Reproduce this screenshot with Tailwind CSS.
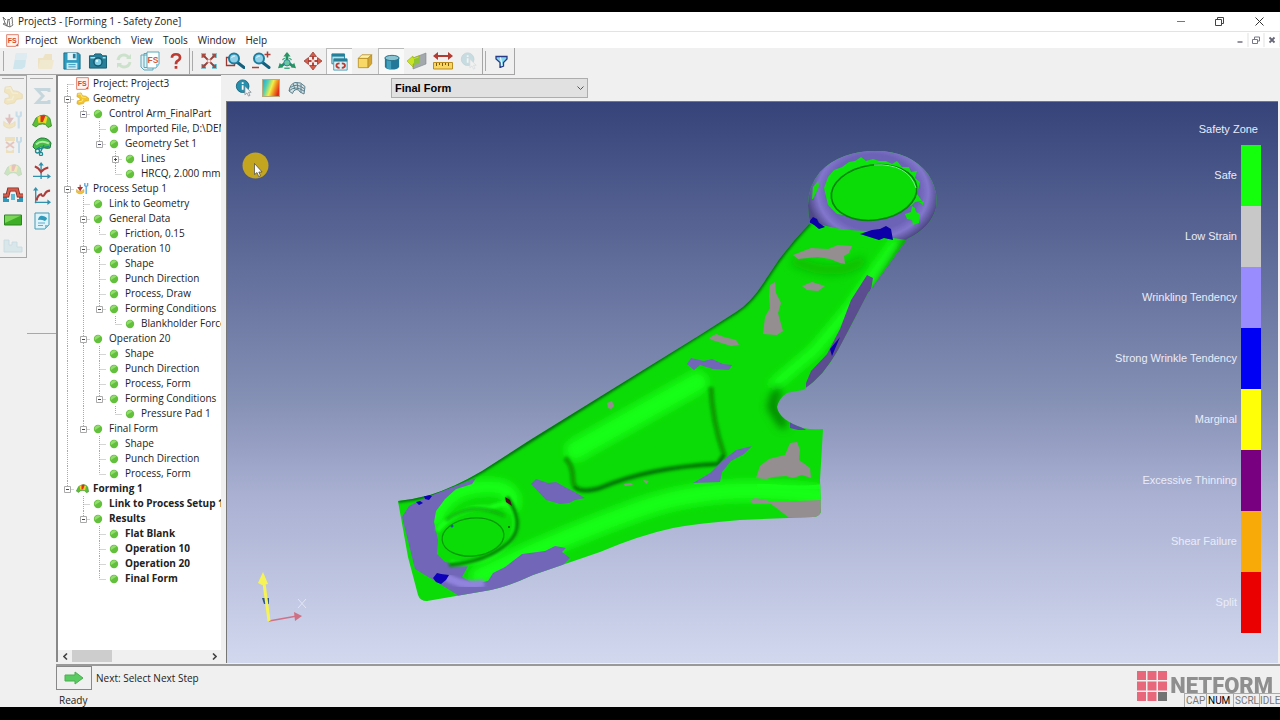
<!DOCTYPE html>
<html lang="en">
<head>
  <meta charset="UTF-8" />
  <meta name="viewport" content="width=device-width, initial-scale=1.0"/>
  <title>Project3 - [Forming 1 - Safety Zone]</title>
  <script src="https://cdn.jsdelivr.net/npm/@tailwindcss/browser@4"></script>
</head>
<body class="bg-black h-screen flex flex-col pt-3 pb-[13px] overflow-hidden font-['Open_Sans','Noto_Sans',sans-serif] text-[10px] text-[#222]">

  <!-- Shared icons -->
  <svg class="hidden">
    <symbol id="i-fs" viewBox="0 0 14 14">
      <path d="M.7.7h12.6v9.3l-3 3.3H.7z" fill="#fff4f0" stroke="#dd7a66"/>
      <path d="M13.3 10v3.3H10z" fill="#d9583f"/>
      <text x="6.8" y="9.6" font-size="7.5" font-weight="700" text-anchor="middle" fill="#d8452b" font-family="Liberation Sans">FS</text>
    </symbol>
    <symbol id="i-dot" viewBox="0 0 10 10">
      <circle cx="5" cy="5" r="4.2" fill="#63c03c"/>
      <path d="M2 6a3.3 3.3 0 0 1 5.500-3.500z" fill="#93dc70"/>
    </symbol>
    <symbol id="i-geometry" viewBox="0 0 14 14">
      <path d="M1.500 1.500l4-.5 1.500 3 3.500.5 3 2v3l-4 .5-1.500 2.500-5 1-2-1 .5-3 3-.5-.5-2.500-3-1.500z" fill="#f2c52f" stroke="#cf9a14" stroke-width=".6"/>
      <path d="M2 2.500l3-.5 1.500 3.500 4 .5M3 10.500l3.500-.5 1-2.500" stroke="#fce88a" fill="none"/>
    </symbol>
    <symbol id="i-setup" viewBox="0 0 14 14">
      <path d="M.5 8q4 4 8 0v3q-4 3.500-8 0z" fill="#f0c43b" stroke="#c49517" stroke-width=".5"/>
      <path d="M4.500 3v4M2.500 6l2 3 2-3z" stroke="#b0352c" stroke-width="1.200" fill="#b0352c"/>
      <path d="M11 5v8M9.500 1v3l1.500 1 1.500-1V1" fill="none" stroke="#5cabdc" stroke-width="1.500"/>
    </symbol>
    <symbol id="i-forming" viewBox="0 0 20 16">
      <path d="M.5 12L4 5q4-3 8-3 4 .5 6 3.500l1.500 7.500-3.500 1.500-2.500-3q-3-1-6.500 0L4 14z" fill="#5cbf35" stroke="#39872a" stroke-width=".8"/>
      <path d="M5.500 4q5-3 10 0l-1.500 6.500q-4-1.500-7.500-.5z" fill="#f4d427"/>
      <path d="M8.500 2.500q3-1 5 0L11 9H8.500z" fill="#d8331d"/>
    </symbol>
    <symbol id="i-trimmed" viewBox="0 0 20 20">
      <path d="M1 11Q2 4 9 2q7-.5 10 5l-1 5q-4 1-6-.5-4-1.500-6 .5l-2 2z" fill="#43bd45" stroke="#1f7b35"/>
      <path d="M4 8.500q5-5 13-1" stroke="#aeeaa0" stroke-width="2" fill="none"/>
      <path d="M6 13l11-2.500M8 17l4-8" stroke="#1d8a93" stroke-width="1.300"/>
      <circle cx="5.500" cy="15" r="2" fill="none" stroke="#1d8a93" stroke-width="1.300"/><circle cx="9" cy="18" r="1.600" fill="none" stroke="#1d8a93" stroke-width="1.300"/>
    </symbol>
    <symbol id="i-die" viewBox="0 0 20 16">
      <path d="M0 15V9h4v3h2v3zM20 15V9h-4v3h-2v3z" fill="#3097b9"/>
      <path d="M8 7h4v6H8z" fill="#62bbd5"/>
      <path d="M0 8.500h4.500l1.500-6h8l1.500 6H20" fill="none" stroke="#742a24" stroke-width="4"/>
      <path d="M0 8.500h4.500l1.500-6h8l1.500 6H20" fill="none" stroke="#d75d4b" stroke-width="2.400"/>
    </symbol>
    <symbol id="i-tools" viewBox="0 0 20 20">
      <path d="M2 2h10v4H2zM3 14q4 4 8 0v4H3z" fill="#e5b12d"/>
      <path d="M3 7l8 6M11 7l-8 6" stroke="#c44d32" stroke-width="2"/>
      <path d="M16 8v10M14 2v4l2 2 2-2V2" fill="none" stroke="#4ba5d5" stroke-width="2"/>
    </symbol>
    <symbol id="i-mag" viewBox="0 0 20 20">
      <path d="M11.500 11.500l6.500 5" stroke="#14617f" stroke-width="3" stroke-linecap="round"/>
      <circle cx="8" cy="7.500" r="5" fill="#8fd0e8" stroke="#1d7d9f" stroke-width="2"/>
      <path d="M5.500 7q1-2.500 3.500-2" stroke="#e5f8ff" fill="none"/>
    </symbol>
    <symbol id="i-info" viewBox="0 0 20 20">
      <circle cx="8.500" cy="8" r="7" fill="#278eab" stroke="#166780"/>
      <path d="M8.500 7v5M8.500 3.500v2" stroke="#fff" stroke-width="2"/>
      <path d="M11 8v9.500l2.300-2 1.700 3.500 1.700-.8-1.700-3.400h3z" fill="#f1f5f7" stroke="#76858b" stroke-width=".8"/>
    </symbol>
  </svg>

  <!-- Title bar -->
  <header class="h-5 shrink-0 bg-white border-b border-[#e3e3e3] flex items-center pl-[2px]">
    <svg class="w-3 h-3 mr-1" viewBox="0 0 12 12" fill="none" stroke="#666" stroke-width=".9"><path d="M1 1l2 6 2 3 1-7M5 10l3 1 3-2-1-2M8 11L7 4l3-3 .5 6M1 1l3 3M3 7L1 8l4 2M7 4L6 3"/></svg>
    <h1>Project3 - [Forming 1 - Safety Zone]</h1>
    <div class="ml-auto flex">
      <button aria-label="Minimize" class="w-[39px] h-[19px] grid place-items-center"><svg class="w-2 h-2" viewBox="0 0 8 8"><path d="M0 3.500h8" stroke="#777"/></svg></button>
      <button aria-label="Restore" class="w-[39px] h-[19px] grid place-items-center"><svg class="w-[9px] h-[9px]" viewBox="0 0 9 9" fill="none" stroke="#444"><path d="M.5 2.500h6v6h-6zM2.500 2.500v-2h6v6h-2"/></svg></button>
      <button aria-label="Close" class="w-[41px] h-[19px] grid place-items-center"><svg class="w-[9px] h-[9px]" viewBox="0 0 9 9" stroke="#333"><path d="M.5.5l8 8M8.500.5l-8 8"/></svg></button>
    </div>
  </header>

  <!-- Menu bar -->
  <nav class="h-4 shrink-0 bg-white flex items-center pl-[6px]">
    <svg class="w-[13px] h-[13px] mr-[6px]"><use href="#i-fs"/></svg>
    <div class="flex gap-[10px]">
      <button>Project</button>
      <button>Workbench</button>
      <button>View</button>
      <button>Tools</button>
      <button>Window</button>
      <button>Help</button>
    </div>
    <div class="ml-auto flex gap-[2px] bg-[#f0f0f0] pr-px">
      <button aria-label="Minimize window" class="w-[14px] h-[14px] bg-white grid place-items-center"><svg class="w-2 h-2" viewBox="0 0 8 8"><path d="M1.500 6h5" stroke="#667" stroke-width="1.400"/></svg></button>
      <button aria-label="Restore window" class="w-[14px] h-[14px] bg-white grid place-items-center"><svg class="w-2 h-2" viewBox="0 0 8 8" fill="none" stroke="#778"><path d="M.5 3.500h5v4h-5zM2.500 3V1h5v4H6"/></svg></button>
      <button aria-label="Close window" class="w-[14px] h-[14px] bg-white grid place-items-center"><svg class="w-2 h-2" viewBox="0 0 8 8"><path d="M1.500 1.500l5 5M6.500 1.500l-5 5" stroke="#667" stroke-width="1.800"/></svg></button>
    </div>
  </nav>

  <!-- Main toolbar -->
  <div class="h-[27px] shrink-0 bg-[#f0f0f0] flex">
    <div class="flex items-center border-b border-r border-[#a5a5a5] pl-[3px]">
      <span class="w-px h-5 bg-[#aaa] mr-[3px]"></span>
      <button disabled aria-label="New" class="w-[26px] h-[26px] grid place-items-center"><svg class="w-5 h-5 opacity-20" viewBox="0 0 20 20"><path d="M6 2h11l-2 14-3 2H3z" fill="#4bbbe6"/><path d="M6 2h11l-1 7H5z" fill="#9ce1f5"/></svg></button>
      <button disabled aria-label="Open" class="w-[26px] h-[26px] grid place-items-center"><svg class="w-5 h-5 opacity-25" viewBox="0 0 20 20"><path d="M2 7h5l2-4h7v14H2z" fill="#e9b94a"/><path d="M4 9h14l-2 9H2z" fill="#f5d273"/></svg></button>
      <button aria-label="Save" class="w-[26px] h-[26px] grid place-items-center"><svg class="w-[18px] h-[18px]" viewBox="0 0 20 20"><path d="M1 1h16l2 2v16H1z" fill="#2e9bc0" stroke="#176983"/><path d="M5 1h10v8H5z" fill="#e4f3f8"/><path d="M11 2h3v5h-3z" fill="#237e9e"/><path d="M4 12h12v7H4z" fill="#c9eaf4"/><path d="M6 14h8M6 16.500h8" stroke="#3295b5"/></svg></button>
      <button aria-label="Screenshot" class="w-[26px] h-[26px] grid place-items-center"><svg class="w-5 h-[18px]" viewBox="0 0 20 19"><path d="M1 4h4l2-2h6l2 2h4v13H1z" fill="#277f99" stroke="#155a70"/><path d="M2 6h5M15 6h3" stroke="#a7e3ef" stroke-width="1.500"/><circle cx="10" cy="10.500" r="5" fill="#155a70"/><circle cx="10" cy="10.500" r="3.500" fill="#83d0e7"/><circle cx="9" cy="9.500" r="1.200" fill="#e5faff"/></svg></button>
      <button disabled aria-label="Refresh" class="w-[26px] h-[26px] grid place-items-center"><svg class="w-[18px] h-[18px] opacity-25" viewBox="0 0 18 18" fill="none" stroke="#65b860" stroke-width="3"><path d="M3 8q1-5 6-5 3 0 5 3M15 10q-1 5-6 5-3 0-5-3"/><path d="M11 7h5V2zM7 11H2v5z" fill="#65b860" stroke="none"/></svg></button>
      <button aria-label="Copy report" class="w-[26px] h-[26px] grid place-items-center"><svg class="w-5 h-5" viewBox="0 0 20 20"><path d="M1 4h12v15H4l-3-3zM4 2.500h12v14H4z" fill="#dff2f7" stroke="#5fa6b7"/><path d="M7 1h12v12l-3 4H7z" fill="#fbffff" stroke="#5fa6b7"/><path d="M16 17v-4h3z" fill="#8fcddd"/><text x="13" y="11.500" font-size="8.500" font-weight="700" text-anchor="middle" fill="#dc5638" font-family="Liberation Sans">FS</text></svg></button>
      <button aria-label="Help" class="w-[26px] h-[26px] grid place-items-center"><svg class="w-[18px] h-[18px]" viewBox="0 0 20 20" fill="none" stroke="#bc3b31" stroke-width="3"><path d="M5.500 6.500q0-4 4.500-4t4.500 4q0 2-2.500 3.200Q10 10.500 10 13.500M10 15.500v3"/></svg></button>
    </div>
    <div class="flex items-center border-b border-r border-[#a5a5a5] pl-[2px]">
      <span class="w-px h-5 bg-[#aaa] mr-[3px]"></span>
      <button aria-label="Fit view" class="w-[26px] h-[26px] grid place-items-center"><svg class="w-[18px] h-[18px]" viewBox="0 0 18 18"><path d="M1 1h5v5H1zM12 1h5v5h-5zM1 12h5v5H1zM12 12h5v5h-5z" fill="#7fc4d2"/><path d="M3 3l12 12M15 3L3 15" stroke="#9e4038" stroke-width="1.800"/><path d="M2 2h4L2 6zM16 2h-4l4 4zM2 16h4l-4-4zM16 16h-4l4-4z" fill="#a84a40"/><path d="M7.500 7.500h3v3h-3z" fill="#f3e5df"/></svg></button>
      <button aria-label="Zoom window" class="w-[26px] h-[26px] grid place-items-center"><svg class="w-5 h-5" viewBox="0 0 20 20"><path d="M1.500 6.500h8v8h-8z" fill="none" stroke="#9e3932" stroke-width="1.300"/><use href="#i-mag" x="1" width="20" height="20"/></svg></button>
      <button aria-label="Zoom in and out" class="w-[26px] h-[26px] grid place-items-center"><svg class="w-5 h-5" viewBox="0 0 20 20"><use href="#i-mag" width="20" height="20"/><path d="M13.500 3.500h6M16.500.5v6M1 16.500h7" stroke="#ac3c34" stroke-width="1.500"/></svg></button>
      <button aria-label="Rotate" class="w-[26px] h-[26px] grid place-items-center"><svg class="w-[18px] h-[18px]" viewBox="0 0 20 20"><path d="M10 2v9l-7 5M10 11l7 5" fill="none" stroke="#278c66" stroke-width="3"/><path d="M10 0l4 5H6zM0 18l2-6 4 5zM20 18l-2-6-4 5z" fill="#279565"/><circle cx="10" cy="12" r="3.500" fill="#6ac8a1" stroke="#287c94"/><path d="M5 9q1-2 3-2M15 9q-1-2-3-2M7 18h6" stroke="#4aab83" stroke-width="1.500" fill="none"/></svg></button>
      <button aria-label="Pan" class="w-[26px] h-[26px] grid place-items-center"><svg class="w-[18px] h-[18px]" viewBox="0 0 18 18"><path d="M9 2v14M2 9h14" stroke="#b7463a" stroke-width="2"/><path d="M9 0l3.500 4.500h-7zM9 18l3.500-4.500h-7zM0 9l4.500-3.500v7zM18 9l-4.500-3.500v7z" fill="#d35e4c" stroke="#963229" stroke-width=".7"/><path d="M7.500 7.500h3v3h-3z" fill="#f8dcd6"/></svg></button>
      <button aria-label="Synchronize views" class="w-[26px] h-[26px] grid place-items-center bg-[#f9f9f9] border-l border-t border-[#bbb]"><svg class="w-[18px] h-[18px]" viewBox="0 0 20 20"><path d="M1 1h14v11H1z" fill="#b7e0ea" stroke="#22809b"/><path d="M1 1h14v3H1z" fill="#22809b"/><path d="M3 7h15v12H3z" fill="#d9f0f5" stroke="#4a9cb2"/><path d="M3 6h15v3.500H3z" fill="#277f98"/><path d="M9.500 11.500q-3.500 0-3.500 2.500t3.500 2.500M12 11.500q3.500 0 3.500 2.500T12 16.500" fill="none" stroke="#be3a31" stroke-width="2"/></svg></button>
      <button aria-label="Standard view" class="w-[26px] h-[26px] grid place-items-center"><svg class="w-4 h-4" viewBox="0 0 18 18" stroke="#b28a20" stroke-width=".9"><path d="M1.500 6h11v10.500h-11z" fill="#f8d866"/><path d="M1.500 6l4-4h11l-4 4z" fill="#fff0a5"/><path d="M12.500 6l4-4v10l-4 4.500z" fill="#d5a633"/></svg></button>
      <button aria-label="Shaded" class="w-[26px] h-[26px] grid place-items-center bg-[#f9f9f9] border-l border-t border-[#bbb]"><svg class="w-4 h-4" viewBox="0 0 18 18"><path d="M1 4.500v10q2 3 8 3t8-3v-10z" fill="#217899"/><path d="M3 6v10q2 1 5 1V6z" fill="#43a0bc"/><ellipse cx="9" cy="4.500" rx="8" ry="3" fill="#8ac3d2" stroke="#216a83"/></svg></button>
      <button aria-label="Clip plane" class="w-[26px] h-[26px] grid place-items-center"><svg class="w-5 h-5" viewBox="0 0 20 20"><path d="M6 7l13-5v11L6 18z" fill="#a2a8ac" stroke="#80868a" stroke-width=".6"/><path d="M0 10l6-5v2l6-2v6l-6 2v3z" fill="#c9e422" stroke="#93ad20" stroke-width=".6"/><path d="M7 8l6-2v6l-6 2z" fill="#8ec43a"/></svg></button>
      <button aria-label="Measure" class="w-[26px] h-[26px] grid place-items-center"><svg class="w-5 h-5" viewBox="0 0 20 20"><path d="M3 5h14" stroke="#b23b32" stroke-width="2"/><path d="M0 5l5-4v8zM20 5l-5-4v8z" fill="#b23b32"/><path d="M.5 11.500h19v6.500H.5z" fill="#f8d664" stroke="#bb8d20"/><path d="M3.500 12v3M6.500 12v2M9.500 12v3M12.500 12v2M15.500 12v3" stroke="#7a5c12"/></svg></button>
      <button disabled aria-label="Query" class="w-[26px] h-[26px] grid place-items-center"><svg class="w-[18px] h-[18px] opacity-20"><use href="#i-info"/></svg></button>
    </div>
    <div class="flex items-center border-b border-r border-[#a5a5a5] pl-[2px]">
      <span class="w-px h-5 bg-[#aaa] mr-[2px]"></span>
      <button aria-label="Filter" class="w-[26px] h-[26px] grid place-items-center"><svg class="w-[13px] h-[13px]" viewBox="0 0 13 13"><path d="M1 1.500h11v2.500L8.500 7.500V11l-3.500 1.500V7.500L1 4z" fill="#83d9ed" stroke="#293b87" stroke-width="1.300"/><path d="M5.500 2.500L7 11" stroke="#fff"/></svg></button>
    </div>
  </div>

  <!-- Workspace -->
  <div class="flex-1 min-h-0 flex bg-[#f0f0f0]">
    <!-- Step tools -->
    <div class="w-[27px] h-[183px] shrink-0 border-t border-r border-b border-[#a8a8a8] flex flex-col items-center pt-[2px]">
      <span class="w-[22px] h-px bg-[#aaa] mb-1"></span>
      <button disabled aria-label="Geometry" class="h-[25px]"><svg class="w-5 h-5 opacity-25"><use href="#i-geometry"/></svg></button>
      <button disabled aria-label="Process setup" class="h-[25px]"><svg class="w-5 h-5 opacity-25"><use href="#i-setup"/></svg></button>
      <button disabled aria-label="Tool setup" class="h-[25px]"><svg class="w-5 h-5 opacity-25"><use href="#i-tools"/></svg></button>
      <button disabled aria-label="Forming" class="h-[25px]"><svg class="w-[18px] h-4 opacity-25"><use href="#i-forming"/></svg></button>
      <button aria-label="Die face" class="h-[25px]"><svg class="w-5 h-4"><use href="#i-die"/></svg></button>
      <button aria-label="Blank" class="h-[25px]"><svg class="w-[18px] h-3" viewBox="0 0 18 12"><path d="M.5 1h17v10H.5z" fill="#3fae27" stroke="#2c8423"/><path d="M1 1.500h16L1 9z" fill="#79d657"/></svg></button>
      <button disabled aria-label="Nesting" class="h-[25px]"><svg class="w-5 h-4 opacity-20" viewBox="0 0 20 16"><path d="M1 15V3h5v5h3V5h5v5h5v5z" fill="#83c5da" stroke="#3a91ac"/></svg></button>
    </div>
    <!-- Result tools -->
    <div class="w-[29px] h-[259px] shrink-0 border-b border-[#a8a8a8] flex flex-col items-center pt-[3px]">
      <span class="w-[23px] h-px bg-[#aaa] mb-1"></span>
      <button disabled aria-label="Summary" class="h-[25px]"><svg class="w-[18px] h-[18px] opacity-25" viewBox="0 0 18 18" fill="none" stroke="#4a90a5" stroke-width="3"><path d="M16 5V2.500H4L10 9l-6 6.500h12V13"/></svg></button>
      <button aria-label="Formability" class="h-[25px]"><svg class="w-5 h-4"><use href="#i-forming"/></svg></button>
      <button aria-label="Trim" class="h-[25px]"><svg class="w-5 h-5"><use href="#i-trimmed"/></svg></button>
      <button aria-label="Forming limit" class="h-[25px]"><svg class="w-[18px] h-[18px]" viewBox="0 0 20 20" fill="none"><path d="M9 19V3M0 16h18" stroke="#2f91ac" stroke-width="1.500"/><path d="M9 0l3 4H6zM20 16l-4-3v6z" fill="#2f91ac"/><path d="M2 5q4 1 7 6 3-4 8-5" stroke="#ad3d3b" stroke-width="2.300"/></svg></button>
      <button aria-label="Graph" class="h-[25px]"><svg class="w-[18px] h-[18px]" viewBox="0 0 20 20" fill="none"><path d="M3 18V3M2 17h15" stroke="#2f91ac" stroke-width="1.500"/><path d="M3 0l3 4H0zM20 17l-4-3v6z" fill="#2f91ac"/><path d="M4 15q1-6 5-7 2 4 4 0 2-4 6-4" stroke="#ad3d3b" stroke-width="2.300"/></svg></button>
      <button aria-label="Report" class="h-[25px]"><svg class="w-[18px] h-[18px]" viewBox="0 0 18 18"><path d="M2 1h14v12l-4 4H2z" fill="#def4fa" stroke="#429bb5"/><path d="M12 17v-4h4z" fill="#7dc1d4"/><path d="M5 8q1-5 5-4t4 3l-2 2q-4-2-7-1z" fill="#319bbb"/><path d="M5 11h7M5 13.500h5" stroke="#60aeca"/></svg></button>
    </div>

    <!-- Project tree -->
    <aside class="w-[165px] shrink-0 bg-white border-l-2 border-t border-[#888] flex flex-col mb-[2px]">
      <ul id="tree" class="flex-1 min-h-0 overflow-hidden whitespace-nowrap"></ul>
      <div class="h-3 shrink-0 bg-[#f0f0f0] flex items-center">
        <button aria-label="Scroll left" class="w-[14px] h-3 grid place-items-center"><svg class="w-[5px] h-[7px]" viewBox="0 0 5 7" fill="none" stroke="#444" stroke-width="1.600"><path d="M4 .5l-3 3 3 3"/></svg></button>
        <span class="w-10 h-3 bg-[#cdcdcd]"></span>
        <button aria-label="Scroll right" class="ml-auto w-[14px] h-3 grid place-items-center"><svg class="w-[5px] h-[7px]" viewBox="0 0 5 7" fill="none" stroke="#444" stroke-width="1.600"><path d="M1 .5l3 3-3 3"/></svg></button>
      </div>
    </aside>

    <!-- Result view -->
    <main class="flex-1 min-w-0 flex flex-col pl-[5px] pr-[2px] pb-px">
      <div class="h-[26px] shrink-0 flex items-center pl-1">
        <button aria-label="Node info" class="w-[27px] grid place-items-center"><svg class="w-[18px] h-[18px]"><use href="#i-info"/></svg></button>
        <button aria-label="Contour" class="w-[27px] grid place-items-center">
          <span class="w-[18px] h-[18px] border border-[#b9aa80] bg-[linear-gradient(110deg,#27a8d8_0%,#54d0b0_25%,#f4ee45_50%,#f08a20_70%,#e02d18_90%)]"></span>
        </button>
        <button aria-label="Mesh" class="w-[26px] grid place-items-center"><svg class="w-[18px] h-4" viewBox="0 0 18 16" fill="none" stroke="#5b7f8c"><path d="M1 11Q2 4 7 2.500q6-1 10 4l-1 7.500-4-2q-1-3-4-2.500-3 1-3.500 4z" fill="#d5e2e5"/><path d="M2.500 7.500q6-5 13.500 1M1 11q6-6 15 0M5 3.500l2 6M9 2.300l1 7M13 3.500l0 9"/></svg></button>
        <div class="relative ml-[81px] w-[197px] h-5">
          <select aria-label="Result stage" class="appearance-none w-full h-full bg-[#e1e1e1] border border-[#adadad] pl-[3px] font-['Liberation_Sans',sans-serif] font-bold text-[11px] leading-4 text-black">
            <option>Final Form</option>
            <option>Flat Blank</option>
            <option>Operation 10</option>
            <option>Operation 20</option>
          </select>
          <svg class="absolute right-1 top-2 w-[7px] h-[5px] pointer-events-none" viewBox="0 0 7 5" fill="none" stroke="#555"><path d="M.5.5l3 3 3-3"/></svg>
        </div>
      </div>

      <div class="relative flex-1 min-h-0 border-t border-l border-[#777] bg-[linear-gradient(#35437a,#8590b5_53%,#a9b0d2_70%,#d2d8ee)] overflow-hidden">
        <svg class="w-full h-full" viewBox="227 102 1051 561" role="img" aria-label="Control arm safety zone">
          <defs>
            <filter id="soft" x="-20%" y="-20%" width="140%" height="140%"><feGaussianBlur stdDeviation="4"/></filter>
            <filter id="edge" x="-20%" y="-20%" width="140%" height="140%"><feGaussianBlur stdDeviation="1.500"/></filter>
            <filter id="zone" x="-5%" y="-5%" width="110%" height="110%"><feGaussianBlur stdDeviation=".7"/></filter>
            <path id="arm" d="M398 501Q415 499 430 495Q455 487 482 471L530 440L700 335L736 312Q752 302 766 279L778 261Q792 242 810 223Q803 192 820 172Q840 151 876 151Q910 151 928 174Q939 191 936 208Q931 228 907 239L868 293L838 350Q825 375 803 390Q795 391 787 393Q779 398 777 407Q779 420 803 428Q812 430 823 429L820 480L821 512Q819 517 813 517L740 520Q700 523 673 528Q640 535 600 552L533 575Q505 588 485 591L427 601Q420 601 418 595L408 557Z"/>
            <clipPath id="armClip"><use href="#arm"/></clipPath>
            <radialGradient id="ring" cx="873" cy="193" r="66" gradientTransform="translate(0 34) scale(1 .82)" gradientUnits="userSpaceOnUse">
              <stop offset=".7" stop-color="#6c62b6"/><stop offset=".84" stop-color="#8276cc"/><stop offset="1" stop-color="#4f4a88"/>
            </radialGradient>
          </defs>
          <use href="#arm" fill="#0bdb06"/>
          <g clip-path="url(#armClip)">
            <!-- shading along the flanges -->
            <g filter="url(#soft)" fill="none" stroke-linecap="round">
              <path d="M480 576Q560 538 640 509T830 497" stroke="#17ff12" stroke-width="20"/>
              <path d="M576 450L697 382" stroke="#17ff12" stroke-width="22"/>
              <path d="M895 244L850 308L815 350L775 384" stroke="#17ff12" stroke-width="12"/>
              <path d="M436 520Q445 490 480 487T512 505" stroke="#17ff12" stroke-width="16"/>
              <path d="M797 262Q835 278 860 262" stroke="#08bd05" stroke-width="10"/>
              <path d="M908 240L842 345" stroke="#08860a" stroke-width="10"/>
              <path d="M777 390L772 407L783 424" stroke="#067606" stroke-width="8"/>
            </g>
            <g filter="url(#edge)" fill="none">
              <path d="M398 501Q415 499 430 495Q455 487 482 471L736 312Q752 302 766 279L778 261Q792 242 810 223" stroke="#064d12" stroke-width="3"/>
              <path d="M565 458Q573 465 573 480T600 488Q650 467 718 464L724 455Q712 420 711 387" stroke="#079a05" stroke-width="5"/>
              <path d="M574 487Q582 494 600 488Q650 467 718 464L724 455" stroke="#055a08" stroke-width="2"/>
            </g>
            <g filter="url(#zone)">
              <!-- wrinkling zones -->
              <path d="M402 517L409 506L425 498L476 478L472 484L456 489L445 499L436 511L434 522L438 540L437 554L445 562L468 566L462 577L474 584L488 581L493 573L505 567L522 554L545 551L555 546L566 548L562 552L570 558L562 566L470 606L456 594L440 584L415 569Z" fill="#7166b8"/>
              <path d="M446 577Q466 588 484 583" stroke="#9184de" stroke-width="8" fill="none" filter="url(#edge)"/>
              <path d="M531 484L536 479L548 483L556 482L565 487L573 491L585 498L575 500L569 503L560 504L546 500Z" fill="#7166b8"/>
              <path d="M687 364L691 358L704 361L712 359L723 364L732 365L729 370L713 369L700 365L694 370Z" fill="#7166b8"/>
              <path d="M693 483L710 473L722 461L736 450L752 446L744 454L731 461L722 472L720 482Z" fill="#7166b8"/>
              <path d="M806 383L811 371L827 354L840 329L851 300L867 275L873 278L870 296L839 350L822 374L806 391Z" fill="#5c4e91"/>
              <path d="M790 422L800 426L806 430L798 430L790 428Z" fill="#5a50a5"/>
              <!-- ring -->
              <path d="M808 222Q800 180 824 165Q850 146 892 151Q930 158 940 194Q941 223 907 240L886 237L866 231Q843 230 831 227Z" fill="url(#ring)"/>
              <path d="M812 199l1-12 5-6 1 5-3 7-3 6z" fill="#16dd08"/>
              <path d="M824 188L828 177L834 170L842 167L849 162L855 161L861 157L866 161L873 159L879 161L886 161L892 164L897 161L902 167L909 167L911 172L917 171L915 178L920 182L917 194L922 201L915 202L911 206L900 200L850 216L837 214L828 205Z" fill="#0ee407"/>
              <path d="M905 214l6-2 1-6 3 2 1 4 4 2-1 9-6 2-1-5-5-1zM919 202l5-1-1 4z" fill="#0ee407"/>
              <!-- strong wrinkles -->
              <path d="M809 222l4-5 4 2 2 4 6 4-6 2-5-4zM860 234l12-4 8-1 6-3 5 3 2 11-9-2-5 2zM870 290l3 1-8 13zM840 337l-8 19-2-7z" fill="#0800a8"/>
              <path d="M433 578l4-5 4 1 8 1-3 5-5 4-5-2zM424 496l5-1 3 1-3 4-4-1zM416 502l4-1 3 2-4 2z" fill="#0800b8"/>
              <!-- low strain zones -->
              <g fill="#958e90">
                <path d="M793 255l18-7 17 1 10-4 14 1-3 7-5 3 1 8-5-1-10-4-12-2-20 2zM802 286l10-4 13 4-7 5-11-1zM770 285l5-3 1 11 5 10-3 10 5 18-6 4-14-1 2-17 5-9-1-12z"/>
                <path d="M709 338l7-4 8 3 12 3 3 5-8 1-19-6zM607 403l5-2 2 5-3 3-3-1zM756 478l4-12 9-7 16-4 5-12 7-1 3 8-1 10 11 8 1 10-9-3-9 3-7-2-13 1-7 2zM750 501l5-3 11 2 6 2 50-2-2 19-32-2-18-14-16 1zM624 484l7-1 2 2-8 1zM643 480l6 1-3 3z"/>
              </g>
            </g>
            <path d="M757 485q30 6 68 2" stroke="#17ff12" stroke-width="6" fill="none" filter="url(#zone)"/>
          </g>
          <ellipse cx="874" cy="192.500" rx="43" ry="27.500" transform="rotate(-8 874 192)" fill="#0bdb06" stroke="#05830c" stroke-width="1.600"/>
          <path d="M874 165q34-2 42 23" fill="none" stroke="#7bef91" stroke-width="1"/>
          <!-- boss -->
          <g fill="none">
            <path d="M437 531Q458 505 490 508Q508 500 513 508Q522 535 501 550Q480 566 450 563" stroke="#17ff12" stroke-width="5" filter="url(#edge)"/>
            <path d="M507 497Q527 526 508 543Q486 562 449 565" stroke="#067706" stroke-width="3.500" filter="url(#edge)"/>
            <path d="M446 520Q472 500 505 516" stroke="#0ab007" stroke-width="3" filter="url(#edge)"/>
            <ellipse cx="473" cy="537" rx="31" ry="19" transform="rotate(-6 473 537)" fill="#0bdb06" stroke="#0a970c" stroke-width="1.200"/>
            <path d="M505 497l5 3 2 6-6-4z" fill="#4b0b22"/>
            <circle cx="452" cy="526" r="1.500" fill="#2253a5"/><circle cx="509" cy="527" r="1" fill="#075a0a"/>
          </g>
          <!-- axis triad -->
          <path d="M269 621l28-5" stroke="#cf7288" stroke-width="1.500"/><path d="M302 616l-8-4 1 9z" fill="#cf6f83"/>
          <path d="M262 598h7v6h-5z" fill="#31568e"/>
          <path d="M269 621l-5-38" stroke="#f5f356" stroke-width="3"/><path d="M263 572l-5 11 4 2 6-1z" fill="#f5f356"/>
          <path d="M298 599l8 9M306 599l-8 9" stroke="#e3e6f4"/>
          <!-- pointer -->
          <circle cx="255.500" cy="165.500" r="13" fill="#c3a51f"/>
          <path d="M254.500 163.500v11l2.500-2 1.700 4 1.800-.8-1.700-3.700h3.300z" fill="#fff" stroke="#444" stroke-width=".7"/>
        </svg>

        <section class="absolute top-[20px] right-[17px] font-['Liberation_Sans',sans-serif] text-[11px] text-[#e9ecf8]">
          <h2 class="text-right pr-[3px] h-[23px] leading-[14px]">Safety Zone</h2>
          <ul id="legend"></ul>
        </section>
      </div>
    </main>
  </div>

  <!-- Next step and status -->
  <footer class="relative shrink-0 bg-[#f0f0f0] pl-14">
    <div class="h-[26px] border-t-2 border-[#999] flex items-center gap-1">
      <button aria-label="Next step" class="w-9 h-6 border border-[#888] grid place-items-center"><svg class="w-5 h-[14px]" viewBox="0 0 20 14"><path d="M1 4h10V1l8 6-8 6v-3H1z" fill="#5acb63" stroke="#4aaf4e"/></svg></button>
      <span>Next: Select Next Step</span>
    </div>
    <div class="h-[17px] flex items-end pl-[3px]">
      <span class="leading-[14px]">Ready</span>
      <div class="ml-auto flex text-[#777] font-[Roboto,sans-serif] leading-[13px]">
        <span class="border-l border-t border-[#aaa] w-[22px] pl-px">CAP</span>
        <span class="border-l border-t border-[#aaa] w-[27px] pl-px text-black">NUM</span>
        <span class="border-l border-t border-[#aaa] w-[26px] pl-px">SCRL</span>
        <span class="border-l border-t border-[#aaa] w-[21px]">IDLE</span>
      </div>
    </div>
    <div class="absolute right-[7px] top-[7px] flex items-center gap-[3px] opacity-80 pointer-events-none">
      <svg class="w-[30px] h-[30px]" viewBox="0 0 30 30"><path d="M0 0h9v9H0zM10.500 0h9v9h-9zM21 0h9v9h-9zM0 10.500h9v9H0zM10.500 10.500h9v9h-9zM21 10.500h9v9h-9zM0 21h9v9H0zM10.500 21h9v9h-9z" fill="#e8455f"/><path d="M21 21h9v9h-9z" fill="#555"/></svg>
      <span class="font-[Roboto,sans-serif] font-black text-[22px] leading-[30px] text-[#777]">NETFORM</span>
    </div>
  </footer>

  <script>
    // [depth, label, icon, expander, bold]
    const nodes = [
      [0, "Project: Project3", "fs"],
      [0, "Geometry", "geometry", "-"],
      [1, "Control Arm_FinalPart", "dot", "-"],
      [2, "Imported File, D:\\DEM", "dot"],
      [2, "Geometry Set 1", "dot", "-"],
      [3, "Lines", "dot", "+"],
      [3, "HRCQ, 2.000 mm", "dot"],
      [0, "Process Setup 1", "setup", "-"],
      [1, "Link to Geometry", "dot"],
      [1, "General Data", "dot", "-"],
      [2, "Friction, 0.15", "dot"],
      [1, "Operation 10", "dot", "-"],
      [2, "Shape", "dot"],
      [2, "Punch Direction", "dot"],
      [2, "Process, Draw", "dot"],
      [2, "Forming Conditions", "dot", "-"],
      [3, "Blankholder Force", "dot"],
      [1, "Operation 20", "dot", "-"],
      [2, "Shape", "dot"],
      [2, "Punch Direction", "dot"],
      [2, "Process, Form", "dot"],
      [2, "Forming Conditions", "dot", "-"],
      [3, "Pressure Pad 1", "dot"],
      [1, "Final Form", "dot", "-"],
      [2, "Shape", "dot"],
      [2, "Punch Direction", "dot"],
      [2, "Process, Form", "dot"],
      [0, "Forming 1", "forming", "-", true],
      [1, "Link to Process Setup 1", "dot", "", true],
      [1, "Results", "dot", "-", true],
      [2, "Flat Blank", "dot", "", true],
      [2, "Operation 10", "dot", "", true],
      [2, "Operation 20", "dot", "", true],
      [2, "Final Form", "dot", "", true]
    ];

    // true when another node follows on this level under the same parent
    function continues(index, level) {
      for (let i = index + 1; i < nodes.length; i++) {
        if (nodes[i][0] < level) return false;
        if (nodes[i][0] === level) return true;
      }
      return false;
    }

    function guide(index, level) {
      const [depth, , , expander] = nodes[index];
      const more = continues(index, level);
      let d = "";
      if (level < depth) {
        if (more) d = "M9.5 0V15";
      } else {
        d = (index ? "M9.5 0V8" : "") + (more ? "M9.5 8V15" : "") + "M9.5 8.5H16";
      }
      const box = level === depth && expander
        ? `<path d="M6.5 5.5h6v6h-6z" fill="#fff" stroke="#aaa"/><path d="${expander === "+" ? "M8 8.5h3M9.5 7v3" : "M8 8.5h3"}" stroke="#446"/>`
        : "";
      return `<svg class="w-4 h-[15px] shrink-0" viewBox="0 0 16 15"><path d="${d}" stroke="#aaa" stroke-dasharray="1 1" fill="none"/>${box}</svg>`;
    }

    document.getElementById("tree").innerHTML = nodes.map(([depth, label, icon, , bold], i) => {
      let guides = "";
      for (let level = 0; level <= depth; level++) guides += guide(i, level);
      const size = icon === "dot" ? "w-[10px] h-[10px]" : "w-[13px] h-[13px]";
      return `
        <li class="flex items-center h-[15px]">
          ${guides}
          <span class="w-4 h-[15px] shrink-0 grid place-items-center"><svg class="${size}"><use href="#i-${icon}"/></svg></span>
          <span class="pl-[3px] leading-[15px] ${bold ? "font-bold" : ""}">${label}</span>
        </li>`;
    }).join("");

    const zones = [
      ["Safe", "bg-[#14ff0c]"],
      ["Low Strain", "bg-[#c8c8c8]"],
      ["Wrinkling Tendency", "bg-[#988cff]"],
      ["Strong Wrinkle Tendency", "bg-[#0000f5]"],
      ["Marginal", "bg-[#ffff08]"],
      ["Excessive Thinning", "bg-[#780080]"],
      ["Shear Failure", "bg-[#f8aa08]"],
      ["Split", "bg-[#ea0000]"]
    ];

    document.getElementById("legend").innerHTML = zones.map(([name, color]) => `
      <li class="flex items-center justify-end gap-1 h-[61px]">
        <span>${name}</span>
        <span class="w-[20px] h-full ${color}"></span>
      </li>`).join("");
  </script>
</body>
</html>
